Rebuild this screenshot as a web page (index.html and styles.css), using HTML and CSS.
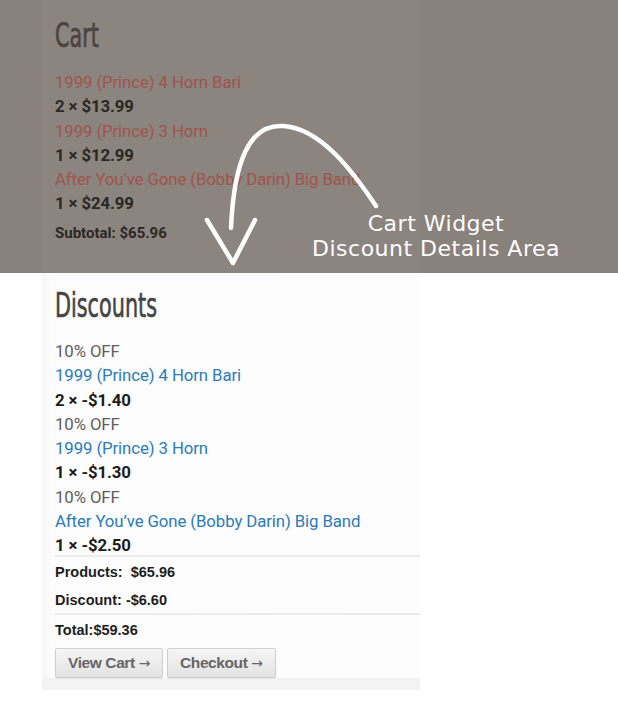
FILE: index.html
```html
<!DOCTYPE html>
<html lang="en">
<head>
<meta charset="utf-8">
<title>Cart widget</title>
<link rel="stylesheet" href="styles.css">
</head>
<body>
<div class="page">
  <section class="dimmed">
    <div class="widget widget-cart">
      <h2 class="widget-title">Cart</h2>
      <ul class="lines">
        <li class="item-name">1999 (Prince) 4 Horn Bari</li>
        <li class="item-qty">2 × $13.99</li>
        <li class="item-name">1999 (Prince) 3 Horn</li>
        <li class="item-qty">1 × $12.99</li>
        <li class="item-name">After You’ve Gone (Bobby Darin) Big Band</li>
        <li class="item-qty">1 × $24.99</li>
      </ul>
      <p class="subtotal">Subtotal: $65.96</p>
    </div>
  </section>

  <section class="widget widget-discounts">
    <h2 class="widget-title">Discounts</h2>
    <ul class="lines">
      <li class="off">10% OFF</li>
      <li class="name">1999 (Prince) 4 Horn Bari</li>
      <li class="qty">2 × -$1.40</li>
      <li class="off">10% OFF</li>
      <li class="name">1999 (Prince) 3 Horn</li>
      <li class="qty">1 × -$1.30</li>
      <li class="off">10% OFF</li>
      <li class="name">After You’ve Gone (Bobby Darin) Big Band</li>
      <li class="qty">1 × -$2.50</li>
    </ul>
    <div class="totals">
      <p class="row row-products">Products:&nbsp; $65.96</p>
      <p class="row row-discount">Discount: -$6.60</p>
      <p class="row row-total">Total:$59.36</p>
    </div>
    <div class="buttons">
      <a class="btn" href="#">View Cart <span class="arr">→</span></a>
      <a class="btn" href="#">Checkout <span class="arr">→</span></a>
    </div>
  </section>

  <div class="note">
    <svg class="note-arrow" width="618" height="273" viewBox="0 0 618 273">
      <path d="M376 206 C352 170 320 128 283 126 C249 124 234 162 231 228" />
      <path d="M207 220 L233 263 L255 220" />
    </svg>
    <p class="note-text">Cart Widget<br>Discount Details Area</p>
  </div>
</div>
</body>
</html>
```

FILE: styles.css
```css
* { box-sizing: border-box; }

html, body {
  margin: 0;
  padding: 0;
  background: #ffffff;
}

.page {
  position: relative;
  width: 618px;
  height: 706px;
  overflow: hidden;
  font-family: Roboto, "Liberation Sans", sans-serif;
}

ul, p, h2 { margin: 0; padding: 0; }
ul { list-style: none; }

/* dimmed upper part holding the cart widget */
.dimmed {
  height: 273px;
  background: #89817c;
  padding-left: 42px;
}

.widget-cart {
  width: 378px;
  height: 273px;
  padding: 17px 13px 0;
  background: #8b847f;
}

.widget-title {
  font-family: "DejaVu Sans Condensed", "Liberation Sans Narrow", sans-serif;
  font-weight: 400;
  font-size: 33px;
  line-height: 38px;
  transform: scaleX(0.7);
  transform-origin: left center;
  -webkit-text-stroke: 0.6px currentColor;
}

.widget-cart .widget-title { color: #4a4340; }

.lines li {
  font-size: 16.8px;
  line-height: 24.3px;
  letter-spacing: -0.1px;
}

.widget-cart .lines { margin-top: 15px; }
.item-name { color: #a0544c; }
.item-qty { color: #2b2725; font-weight: 700; }

.subtotal {
  margin-top: 5px;
  font-size: 15px;
  line-height: 24px;
  font-weight: 700;
  color: #2b2725;
}

/* discounts widget */
.widget-discounts {
  width: 378px;
  margin-left: 42px;
  height: 417px;
  padding: 14px 0 0 13px;
  background: linear-gradient(to right, #f6f6f6 0, #fcfcfc 10px, #fdfdfd 100%);
  border-bottom: 12px solid #f3f3f3;
}

.widget-discounts .widget-title { color: #444444; }

.widget-discounts .lines { margin-top: 14px; }
.off { color: #5e5e5e; letter-spacing: 0.2px; }
.name { color: #2a7bb8; }
.qty { color: #1c1c1c; font-weight: 700; }

.totals {
  margin-top: -3px;
  border-top: 2px solid #ececec;
}

.row {
  font-family: "Liberation Sans", Arial, sans-serif;
  font-size: 14.5px;
  font-weight: 700;
  color: #1e1e1e;
}

.row-products { line-height: 31px; }
.row-discount {
  line-height: 25px;
  border-bottom: 2px solid #ececec;
}
.row-total { line-height: 30px; }

.buttons {
  display: flex;
  gap: 4px;
  margin-top: 3px;
}

.btn {
  display: inline-block;
  height: 30px;
  padding: 0 12px;
  font-family: "Liberation Sans", Arial, sans-serif;
  font-size: 15.5px;
  font-weight: 700;
  line-height: 28px;
  letter-spacing: -0.4px;
  color: #666666;
  text-decoration: none;
  background: linear-gradient(#f5f5f5, #e3e3e3);
  border: 1px solid #cfcfcf;
  border-radius: 2px;
  box-shadow: 0 1px 1px rgba(0, 0, 0, 0.08);
}

.arr {
  font-family: "DejaVu Sans", sans-serif;
  font-weight: 400;
  font-size: 14px;
}

/* hand-drawn annotation over the cart */
.note {
  position: absolute;
  left: 0;
  top: 0;
  width: 618px;
  height: 273px;
}

.note-arrow {
  position: absolute;
  left: 0;
  top: 0;
}

.note-arrow path {
  fill: none;
  stroke: #ffffff;
  stroke-width: 4.5;
  stroke-linecap: round;
  stroke-linejoin: round;
}

.note-text {
  position: absolute;
  left: 286px;
  top: 211px;
  width: 300px;
  text-align: center;
  font-family: "DejaVu Sans", sans-serif;
  font-size: 22px;
  line-height: 25px;
  letter-spacing: 0.5px;
  color: #ffffff;
}
```
